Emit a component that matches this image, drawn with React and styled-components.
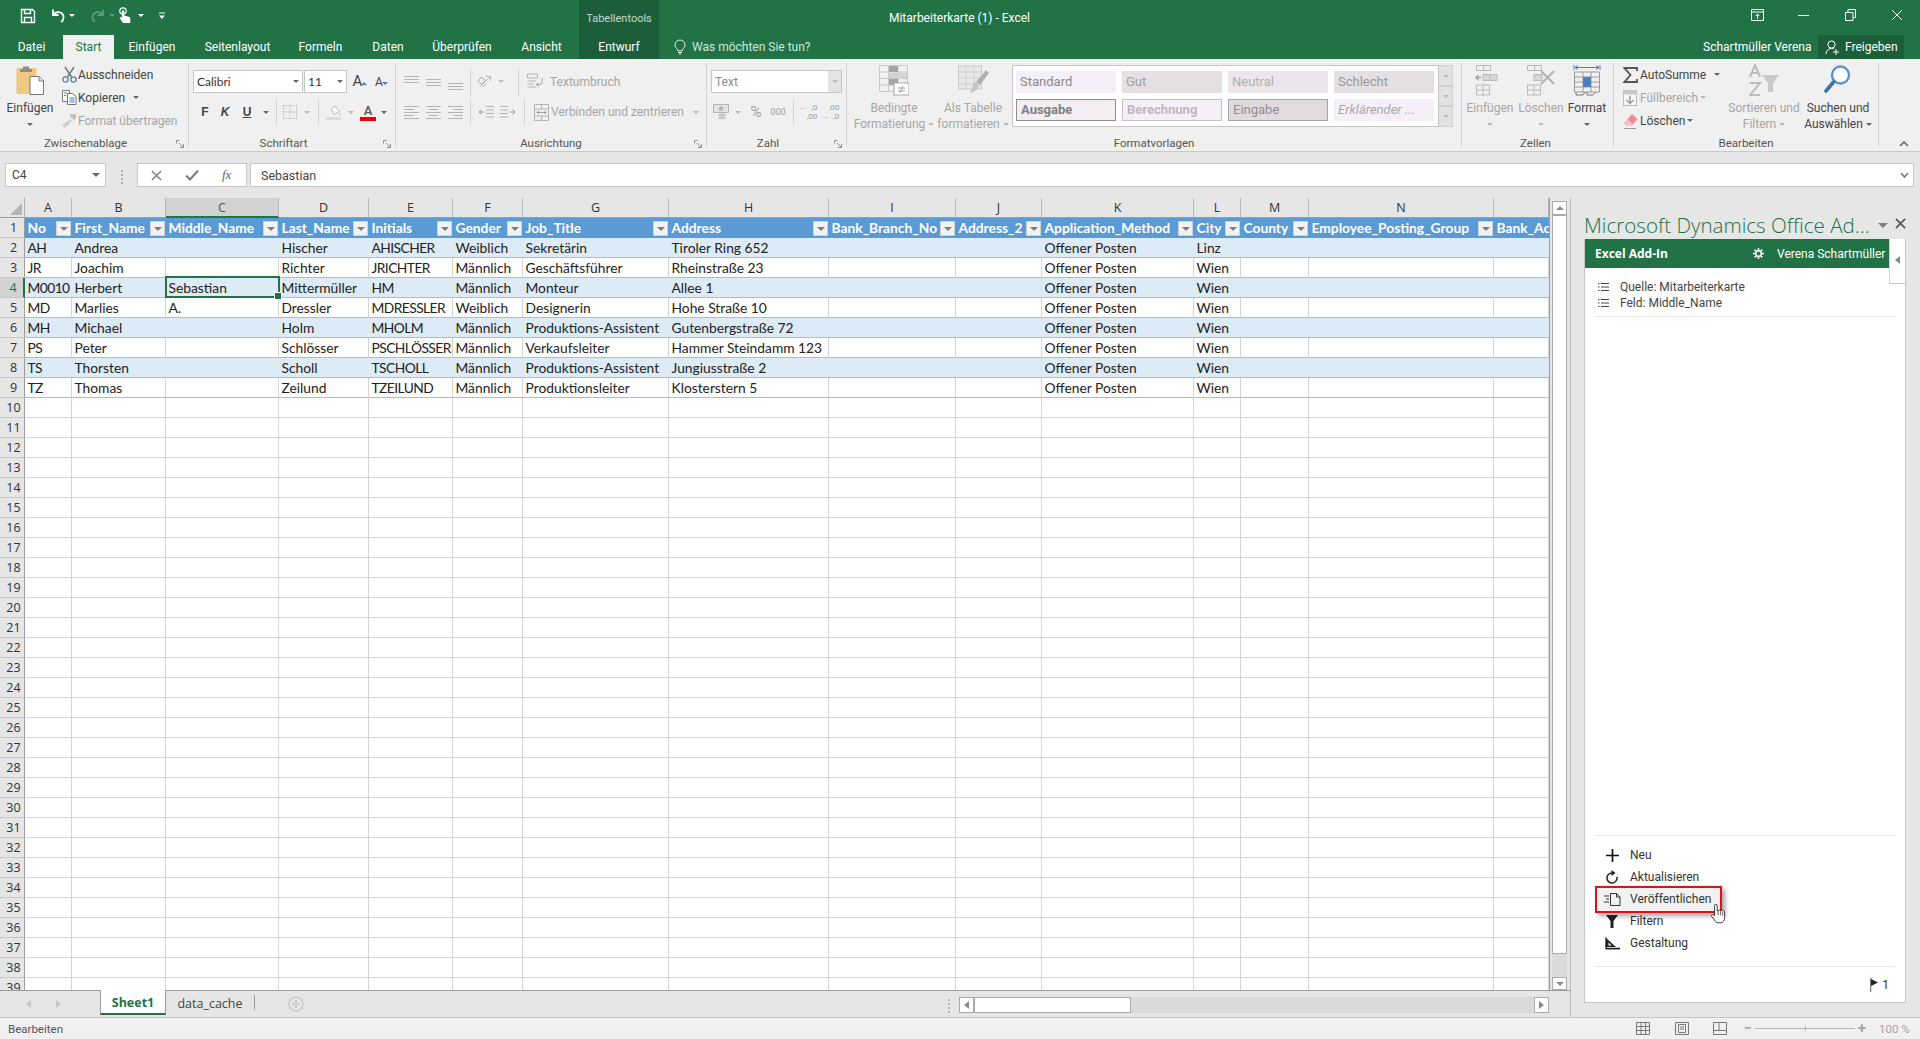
import React from 'react';
import styled, { createGlobalStyle } from 'styled-components';

const GREEN = '#217346';
const DARK = '#1c5e3a';
const OFF = '#a6a6a6';
const UI = '"Roboto", "Open Sans", sans-serif';
const CELL = '"Lato", "Liberation Sans", sans-serif';

const Global = createGlobalStyle`
    html, body { margin: 0; padding: 0; background: #e6e6e6; }
    * { box-sizing: border-box; }
    svg { display: block; }
`;

const Page = styled.div`
    width: 1920px;
    height: 1039px;
    overflow: hidden;
    display: flex;
    flex-direction: column;
    background: #e6e6e6;
    font-family: ${UI};
    font-size: 12px;
    color: #444;
`;

/* ---------- title bar and tabs ---------- */

const Head = styled.div`
    flex: none;
    background: ${GREEN};
    color: #fff;
`;

const TitleRow = styled.div`
    height: 35px;
    display: flex;
`;

const Qat = styled.div`
    width: 579px;
    height: 31px;
    padding-left: 18px;
    display: flex;
    align-items: center;
`;

const ContextLabel = styled.div`
    width: 80px;
    background: ${DARK};
    color: #c5d8cc;
    font-size: 11px;
    text-align: center;
    padding-top: 12px;
`;

const DocTitle = styled.div`
    width: 601px;
    text-align: center;
    padding-top: 11px;
    font-size: 12px;
`;

const WinButtons = styled.div`
    flex: 1;
    display: flex;
    justify-content: flex-end;
    padding-top: 9px;
`;

const WinButton = styled.div`
    width: 46.5px;
    height: 16px;
    display: flex;
    justify-content: center;
`;

const TabRow = styled.div`
    height: 24px;
    display: flex;
    align-items: stretch;
`;

const Tab = styled.div`
    width: ${p => p.$w}px;
    flex: none;
    text-align: center;
    line-height: 24px;
    font-size: 12px;
    background: ${p => (p.$on ? '#f0f0f0' : p.$ctx ? DARK : 'transparent')};
    color: ${p => (p.$on ? GREEN : '#fff')};
`;

const Tell = styled.div`
    width: 1044px;
    display: flex;
    align-items: center;
    padding-left: 15px;
    gap: 6px;
    color: #d3e3d9;
    font-size: 12px;
`;

const UserName = styled.div`
    width: 115px;
    line-height: 24px;
    font-size: 12px;
`;

const Share = styled.div`
    width: 86px;
    display: flex;
    align-items: center;
    gap: 5px;
    padding-left: 7px;
    background: ${DARK};
    font-size: 12px;
`;

/* ---------- ribbon ---------- */

const Ribbon = styled.div`
    height: 93px;
    flex: none;
    background: #f0f0f0;
    border-bottom: 1px solid #c8c8c8;
    padding-top: 4px;
    display: flex;
    align-items: flex-start;
`;

const Group = styled.div`
    position: relative;
    width: ${p => p.$w}px;
    height: 84px;
    flex: none;
    border-right: 1px solid #d2d2d2;
`;

const GroupBody = styled.div`
    height: 72px;
    display: flex;
    padding-left: ${p => p.$pl || 0}px;
    padding-top: ${p => p.$pt || 0}px;
`;

const GroupLabel = styled.div`
    height: 16px;
    line-height: 16px;
    text-align: center;
    padding-right: ${p => p.$pr || 0}px;
    color: #555;
    font-size: 11.5px;
`;

const Launcher = styled.div`
    position: absolute;
    right: 4px;
    bottom: -1px;
`;

const BigButton = styled.div`
    width: ${p => p.$w}px;
    flex: none;
    display: flex;
    flex-direction: column;
    align-items: center;
    color: ${p => (p.$off ? OFF : '#444')};
`;

const BigIcon = styled.div`
    height: 34px;
    display: flex;
    align-items: center;
    justify-content: center;
`;

const BigText = styled.div`
    padding-top: 3px;
    line-height: 16px;
    text-align: center;
    white-space: nowrap;
    display: flex;
    flex-direction: column;
    align-items: center;
`;

const TextLine = styled.div`
    height: 16px;
    display: flex;
    align-items: center;
    gap: 3px;
`;

const Stack = styled.div`
    width: ${p => p.$w}px;
    flex: none;
`;

const StackRow = styled.div`
    height: 23px;
    display: flex;
    align-items: center;
    white-space: nowrap;
    color: ${p => (p.$off ? OFF : '#444')};
`;

const Slot = styled.div`
    width: ${p => p.$w}px;
    flex: none;
    display: flex;
    justify-content: center;
    align-items: center;
    color: ${p => (p.$off ? OFF : '#444')};
`;

const OffText = styled.span`
    color: ${OFF};
`;

const Arrow = styled.span`
    display: inline-block;
    flex: none;
    width: 0;
    height: 0;
    border-left: ${p => p.$s || 3}px solid transparent;
    border-right: ${p => p.$s || 3}px solid transparent;
    border-top: ${p => p.$s || 3}px solid ${p => p.$c || '#666'};
`;

const ArrowUp = styled(Arrow)`
    border-top: 0;
    border-bottom: ${p => p.$s || 3}px solid ${p => p.$c || '#666'};
`;

const Sep = styled.div`
    width: ${p => p.$w}px;
    height: 26px;
    flex: none;
    position: relative;
    &::after {
        content: '';
        display: block;
        width: 1px;
        height: 100%;
        margin: 0 auto;
        background: #d2d2d2;
    }
`;

const Rows = styled.div`
    display: flex;
    flex-direction: column;
    gap: 8px;
`;

const ToolRow = styled.div`
    height: ${p => p.$h || 23}px;
    display: flex;
    align-items: center;
    white-space: nowrap;
`;

const Select = styled.div`
    width: ${p => p.$w}px;
    height: 23px;
    flex: none;
    margin-right: ${p => p.$mr || 0}px;
    background: #fff;
    border: 1px solid #c6c6c6;
    display: flex;
    align-items: center;
    justify-content: space-between;
    padding-left: 3px;
    color: ${p => p.$c || '#333'};
    font-family: ${p => p.$calibri ? CELL : UI};
`;

const SelectDrop = styled.div`
    width: 13px;
    height: 100%;
    display: flex;
    align-items: center;
    justify-content: center;
    background: ${p => (p.$off ? '#e3e3e3' : 'transparent')};
`;

const BoldGlyph = styled.span`
    font-family: "Liberation Sans", sans-serif;
    font-weight: 700;
    font-style: ${p => (p.$i ? 'italic' : 'normal')};
    text-decoration: ${p => (p.$u ? 'underline' : 'none')};
    font-size: 12px;
    color: #444;
`;

const FontA = styled.span`
    position: relative;
    font-family: ${UI};
    font-size: ${p => p.$s}px;
    line-height: 1;
    color: #444;
`;

const ColorA = styled.span`
    display: flex;
    flex-direction: column;
    align-items: center;
    font-size: 13px;
    line-height: 13px;
    font-weight: 500;
    color: #555;
    &::after {
        content: '';
        width: 16px;
        height: 4px;
        background: #f00000;
    }
`;

const SizeMark = styled.span`
    position: absolute;
    top: -1px;
    right: -5px;
`;

const Percent = styled.span`
    font-size: 15px;
    color: #a0a0a0;
`;

const Thousands = styled.span`
    font-size: 9px;
    color: #a0a0a0;
`;

const DecMark = styled.span`
    display: grid;
    grid-template-columns: auto auto;
    font-size: 8px;
    line-height: 9px;
    color: #a0a0a0;
    text-align: right;
`;

const Gallery = styled.div`
    display: flex;
    margin: 2px 0 0 7px;
    height: 62px;
`;

const GalleryGrid = styled.div`
    width: 427px;
    background: #fff;
    border: 1px solid #c6c6c6;
    padding: 5px 3px;
    display: grid;
    grid-template-columns: repeat(4, 100px);
    grid-template-rows: 22px 22px;
    gap: 6px;
`;

const Style = styled.div`
    background: ${p => p.$bg};
    border: ${p => (p.$line ? `1px solid ${p.$line}` : '0')};
    color: ${p => p.$c};
    font-weight: ${p => (p.$b ? 700 : 400)};
    font-style: ${p => (p.$i ? 'italic' : 'normal')};
    padding-left: 4px;
    line-height: ${p => (p.$line ? 20 : 22)}px;
    font-size: 13px;
    white-space: nowrap;
`;

const GalleryScroll = styled.div`
    width: 14px;
    display: grid;
    grid-template-rows: 21px 20px 21px;
`;

const ScrollPart = styled.div`
    background: #e2e2e2;
    border: 1px solid #d0d0d0;
    border-left: 0;
    display: flex;
    align-items: center;
    justify-content: center;
`;

const Collapse = styled.div`
    flex: 1;
    height: 84px;
    display: flex;
    justify-content: flex-end;
    align-items: flex-end;
    padding: 0 11px 0 0;
`;

/* ---------- formula bar ---------- */

const FormulaBar = styled.div`
    height: 46px;
    flex: none;
    padding: 11px 6px 0 5px;
    display: flex;
    align-items: flex-start;
`;

const NameBox = styled.div`
    width: 101px;
    height: 24px;
    background: #fff;
    border: 1px solid #c6c6c6;
    display: flex;
    align-items: center;
    justify-content: space-between;
    padding: 0 5px 0 6px;
    font-size: 12px;
`;

const Dots = styled.div`
    width: 31px;
    height: 24px;
    display: flex;
    flex-direction: column;
    align-items: center;
    justify-content: center;
    gap: 2px;
    &::before, &::after {
        content: '';
        width: 2px;
        height: 2px;
        background: #b5b5b5;
        box-shadow: 0 4px 0 #b5b5b5;
    }
    &::after { margin-top: 4px; }
`;

const FxBox = styled.div`
    width: 110px;
    height: 24px;
    background: #fff;
    border: 1px solid #c6c6c6;
    display: flex;
    align-items: center;
    padding-left: 13px;
    gap: 23px;
`;

const FxText = styled.span`
    font-family: "Liberation Serif", serif;
    font-style: italic;
    color: #666;
    font-size: 13px;
`;

const FormulaInput = styled.div`
    flex: 1;
    height: 24px;
    margin-left: 3px;
    background: #fff;
    border: 1px solid #c6c6c6;
    display: flex;
    align-items: center;
    justify-content: space-between;
    padding: 0 4px 0 10px;
    font-family: ${UI};
    font-size: 12.5px;
`;

/* ---------- grid ---------- */

const Main = styled.div`
    height: 820px;
    flex: none;
    display: flex;
    border-bottom: 1px solid #c6c6c6;
`;

const SheetArea = styled.div`
    width: 1571px;
    flex: none;
    border-right: 1px solid #b8b8b8;
    display: flex;
    flex-direction: column;
`;

const GridWrap = styled.div`
    height: 792px;
    flex: none;
    display: flex;
`;

const Grid = styled.div`
    width: 1550px;
    height: 792px;
    overflow: hidden;
    background: #fff;
    border-right: 1px solid #9c9c9c;
`;

const COLS = [47, 94, 113, 90, 84, 70, 146, 160, 127, 86, 152, 47, 68, 185, 55];
const COL_TRACK = COLS.map(c => c + 'px').join(' ');

const RowLine = styled.div`
    height: 20px;
    display: grid;
    grid-template-columns: 25px ${COL_TRACK};
    grid-template-rows: 20px;
`;

const Corner = styled.div`
    background: #e6e6e6;
    border-right: 1px solid #b0b0b0;
    border-bottom: 1px solid #9c9c9c;
    position: relative;
    overflow: hidden;
    &::after {
        content: '';
        position: absolute;
        right: 2px;
        bottom: 2px;
        border-left: 12px solid transparent;
        border-bottom: 12px solid #b5b5b5;
    }
`;

const ColHead = styled.div`
    background: ${p => (p.$on ? '#d2d2d2' : '#e6e6e6')};
    color: ${p => (p.$on ? GREEN : '#333')};
    border-right: 1px solid #b8b8b8;
    border-bottom: ${p => (p.$on ? `2px solid ${GREEN}` : '1px solid #9c9c9c')};
    text-align: center;
    font-size: 12.5px;
    line-height: 19px;
    font-family: "Open Sans", sans-serif;
`;

const RowHead = styled.div`
    background: ${p => (p.$on ? '#d2d2d2' : '#e6e6e6')};
    color: ${p => (p.$on ? GREEN : '#333')};
    border-right: ${p => (p.$on ? `2px solid ${GREEN}` : '1px solid #9c9c9c')};
    border-bottom: 1px solid #c8c8c8;
    text-align: center;
    font-size: 12.5px;
    line-height: 19px;
    padding-left: 3px;
    font-family: "Open Sans", sans-serif;
`;

const Cell = styled.div`
    position: relative;
    font-family: ${CELL};
    font-size: 13.8px;
    letter-spacing: ${p => (p.$tight ? '-0.55px' : '0')};
    line-height: 19px;
    padding-left: 2.5px;
    color: #222;
    white-space: nowrap;
    overflow: ${p => (p.$sel ? 'visible' : 'hidden')};
    background: ${p => (p.$band ? '#ddebf7' : '#fff')};
    border-bottom: 1px solid ${p => (p.$table ? '#9bc2e6' : '#d4d4d4')};
    border-right: ${p => (p.$band ? '0' : '1px solid #d4d4d4')};
`;

const HeadCell = styled.div`
    position: relative;
    font-family: ${CELL};
    font-size: 13.8px;
    font-weight: 700;
    line-height: 19px;
    padding-left: 2.5px;
    color: #fff;
    background: #5b9bd5;
    white-space: nowrap;
    overflow: hidden;
`;

const FilterButton = styled.div`
    position: absolute;
    right: 1px;
    top: 3px;
    width: 15px;
    height: 15px;
    background: #f2f2f2;
    border: 1px solid #d0d0d0;
    display: flex;
    align-items: center;
    justify-content: center;
`;

const Selection = styled.div`
    position: absolute;
    inset: -2px -1px -1px -1px;
    border: 2px solid ${GREEN};
    z-index: 2;
    &::after {
        content: '';
        position: absolute;
        right: -4px;
        bottom: -4px;
        width: 6px;
        height: 6px;
        background: ${GREEN};
        border: 1px solid #fff;
    }
`;

const VScroll = styled.div`
    width: 15px;
    height: 792px;
    margin-left: 2px;
    padding-top: 3px;
    display: flex;
    flex-direction: column;
`;

const ScrollButton = styled.div`
    width: 15px;
    height: ${p => p.$h || 14}px;
    flex: none;
    background: #fff;
    border: 1px solid #ababab;
    display: flex;
    align-items: center;
    justify-content: center;
`;

const ScrollTrack = styled.div`
    flex: 1;
    background: #dadada;
`;

/* ---------- sheet tabs ---------- */

const TabBar = styled.div`
    height: 27px;
    flex: none;
    display: flex;
    border-top: 1px solid #9c9c9c;
`;

const TabNav = styled.div`
    width: 100px;
    flex: none;
    display: flex;
    align-items: center;
    padding-left: 26px;
    gap: 25px;
    height: 26px;
`;

const SheetTab = styled.div`
    width: ${p => p.$w}px;
    flex: none;
    height: ${p => (p.$on ? 25 : 26)}px;
    margin-top: ${p => (p.$on ? -1 : 0)}px;
    background: ${p => (p.$on ? '#fff' : 'transparent')};
    border-left: ${p => (p.$on ? '1px solid #9c9c9c' : 0)};
    border-right: ${p => (p.$on ? '1px solid #9c9c9c' : 0)};
    border-bottom: ${p => (p.$on ? `2px solid ${GREEN}` : 0)};
    color: ${p => (p.$on ? GREEN : '#444')};
    font-weight: ${p => (p.$on ? 700 : 400)};
    font-family: "Open Sans", sans-serif;
    font-size: 12.5px;
    line-height: 25px;
    text-align: center;
`;

const TabDivider = styled.div`
    width: 1px;
    height: 15px;
    margin-top: 4px;
    background: #9c9c9c;
`;

const AddSheet = styled.div`
    width: 16px;
    height: 16px;
    margin: 5px 0 0 33px;
`;

const HDots = styled(Dots)`
    width: 20px;
    height: 26px;
    margin-left: 635px;
    margin-right: 0;
`;

const HScroll = styled.div`
    width: 590px;
    height: 16px;
    margin-top: 6px;
    display: flex;
    flex: none;
    background: #dadada;
`;

const HButton = styled.div`
    width: ${p => p.$w}px;
    flex: none;
    background: #fff;
    border: 1px solid #ababab;
    display: flex;
    align-items: center;
    justify-content: center;
`;

const HSpace = styled.div`
    flex: 1;
`;

const TriLeft = styled.span`
    width: 0;
    height: 0;
    border-top: 4px solid transparent;
    border-bottom: 4px solid transparent;
    border-right: 5px solid ${p => p.$c || '#8a8a8a'};
`;

const TriRight = styled.span`
    width: 0;
    height: 0;
    border-top: 4px solid transparent;
    border-bottom: 4px solid transparent;
    border-left: 5px solid ${p => p.$c || '#8a8a8a'};
`;

/* ---------- task pane ---------- */

const Pane = styled.div`
    flex: 1;
    padding: 13px 14px 14px 13px;
    display: flex;
    flex-direction: column;
    min-width: 0;
`;

const PaneTitleRow = styled.div`
    height: 28px;
    flex: none;
    display: flex;
    align-items: center;
`;

const PaneTitle = styled.div`
    flex: 1;
    color: ${GREEN};
    font-family: "Open Sans", sans-serif;
    font-weight: 300;
    font-size: 20.6px;
    white-space: nowrap;
`;

const PaneClose = styled.div`
    margin: -4px 0 0 7px;
`;

const PaneBox = styled.div`
    flex: 1;
    min-height: 0;
    display: flex;
    flex-direction: column;
    background: #fff;
    border: 1px solid #c6c6c6;
    position: relative;
`;

const PaneHead = styled.div`
    height: 29px;
    width: 304px;
    flex: none;
    background: ${GREEN};
    color: #fff;
    display: flex;
    align-items: center;
    padding-left: 10px;
    margin-top: -1px;
`;

const PaneBrand = styled.div`
    width: 158px;
    font-weight: 700;
    font-family: "Open Sans", sans-serif;
    font-size: 12px;
`;

const PaneUser = styled.div`
    margin-left: 13px;
    font-size: 12px;
    white-space: nowrap;
`;

const PaneToggle = styled.div`
    position: absolute;
    top: -1px;
    right: 0;
    width: 16px;
    height: 45px;
    background: #fff;
    border-left: 1px solid #d4d4d4;
    border-bottom: 1px solid #c6c6c6;
    display: flex;
    align-items: center;
    justify-content: center;
    padding-bottom: 3px;
`;

const Meta = styled.div`
    margin: 11px 10px 0;
    padding-bottom: 5px;
    border-bottom: 1px solid #e6e6e6;
`;

const MetaRow = styled.div`
    height: 16px;
    display: flex;
    align-items: center;
    gap: 11px;
    padding-left: 3px;
    color: #444;
    font-size: 12px;
`;

const Fill = styled.div`
    flex: 1;
`;

const Actions = styled.div`
    margin: 0 10px;
    padding: 8px 0 12px;
    border-top: 1px solid #e6e6e6;
    border-bottom: 1px solid #e6e6e6;
    display: flex;
    flex-direction: column;
`;

const Action = styled.div`
    position: relative;
    display: flex;
    align-items: center;
    align-self: flex-start;
    width: ${p => (p.$on ? 127 : 200)}px;
    height: ${p => (p.$on ? 27 : 22)}px;
    margin: ${p => (p.$on ? '-2.5px 0' : 0)};
    padding-left: ${p => (p.$on ? 3 : 5)}px;
    color: #333;
    font-size: 12px;
    background: ${p => (p.$on ? '#f2f2f2' : 'transparent')};
    border: ${p => (p.$on ? '2px solid #e2101a' : 0)};
    box-shadow: ${p => (p.$on ? '3px 3px 5px rgba(0,0,0,.35)' : 'none')};
    z-index: ${p => (p.$on ? 1 : 0)};
`;

const ActionIcon = styled.div`
    width: 24px;
    margin-right: 6px;
    display: flex;
    justify-content: center;
`;

const Cursor = styled.div`
    position: absolute;
    right: -7px;
    top: 15px;
    z-index: 3;
`;

const PaneFoot = styled.div`
    height: 35px;
    flex: none;
    display: flex;
    align-items: center;
    justify-content: flex-end;
    gap: 3px;
    padding-right: 16px;
    font-size: 12px;
    color: #333;
`;

/* ---------- status bar ---------- */

const StatusBar = styled.div`
    height: 21px;
    flex: none;
    display: flex;
    align-items: center;
    background: #f0f0f0;
    padding-left: 8px;
    font-size: 11.5px;
    color: #555;
    white-space: nowrap;
`;

const StatusLeft = styled.div`
    width: 1616px;
    flex: none;
`;

const ViewIcon = styled.div`
    width: 38.5px;
    flex: none;
    display: flex;
    justify-content: center;
`;

const Zoom = styled.div`
    display: flex;
    align-items: center;
    margin-left: 4px;
    gap: 3px;
`;

const ZoomMark = styled.div`
    color: #a6a6a6;
    font-size: 15px;
    font-weight: 700;
    line-height: 1;
`;

const ZoomTrack = styled.div`
    position: relative;
    width: 100px;
    height: 1px;
    background: #b5b5b5;
    &::after {
        content: '';
        position: absolute;
        left: 50%;
        top: -2px;
        width: 1px;
        height: 5px;
        background: #b5b5b5;
    }
`;

const ZoomValue = styled.div`
    margin-left: 10px;
    color: #a6a6a6;
`;

/* ---------- icons ---------- */

const Svg = ({ w = 16, h = 16, vb, children, ...rest }) => (
    <svg width={w} height={h} viewBox={vb || `0 0 ${w} ${h}`} fill="none" {...rest}>{children}</svg>
);

const SaveIcon = () => (
    <Svg w={16} h={16}>
        <path d="M1.5 1.5h11l2 2v11h-13z" stroke="#fff" strokeWidth="1.4" />
        <path d="M4.5 1.5v4h6v-4M4.5 14.5v-5h7v5" stroke="#fff" strokeWidth="1.4" />
    </Svg>
);

const UndoIcon = ({ c = '#fff', flip }) => (
    <Svg w={16} h={16} style={flip ? { transform: 'scaleX(-1)' } : null}>
        <path d="M3 1.5v5.5h5.5" stroke={c} strokeWidth="1.8" />
        <path d="M3.5 6.5C5.5 3.8 9.5 3.2 12 5.5s1.8 6.3-.8 8.5" stroke={c} strokeWidth="1.8" />
    </Svg>
);

const TouchIcon = () => (
    <Svg w={14} h={18}>
        <circle cx="5" cy="4" r="3.2" stroke="#fff" strokeWidth="1.2" />
        <path d="M3.8 4.5a1.2 1.2 0 0 1 2.4 0v4l4.5 1.2c1.2.3 1.6 1 1.6 2.2V16H5L1.5 11l1-1 1.3 1z" fill="#fff" />
    </Svg>
);

const CustomizeIcon = () => (
    <Svg w={8} h={8}>
        <path d="M1 1h6" stroke="#fff" />
        <path d="M1 3.5h6L4 7z" fill="#fff" />
    </Svg>
);

const BulbIcon = () => (
    <Svg w={12} h={16}>
        <path d="M3.5 10.5C2 9 1 7.8 1 6a5 5 0 0 1 10 0c0 1.8-1 3-2.5 4.5v1.2h-5z" stroke="#e4eee8" />
        <path d="M4 13.5h4M4.8 15h2.4" stroke="#e4eee8" />
    </Svg>
);

const BoxArrowIcon = () => (
    <Svg w={13} h={12}>
        <path d="M.5.5h12v11H.5zM.5 3h12" stroke="#fff" />
        <path d="M6.5 10V5M4.5 7l2-2 2 2" stroke="#fff" />
    </Svg>
);

const MinIcon = () => <Svg w={11} h={12}><path d="M0 6.5h11" stroke="#fff" /></Svg>;

const RestoreIcon = () => (
    <Svg w={11} h={12}>
        <path d="M.5 3.5h7.5v8H.5zM3 3.5v-3h7.5v8H8" stroke="#fff" />
    </Svg>
);

const CloseIcon = ({ c = '#fff', s = 12, sw = 1 }) => (
    <Svg w={s} h={s} vb="0 0 12 12">
        <path d="M1 1l10 10M11 1L1 11" stroke={c} strokeWidth={sw} />
    </Svg>
);

const ShareIcon = () => (
    <Svg w={15} h={15}>
        <circle cx="6.5" cy="4.5" r="3.6" stroke="#fff" />
        <path d="M1 14c.3-3.4 2.4-5.6 5.5-5.6 1 0 1.8.2 2.5.6" stroke="#fff" />
        <path d="M11 9v6M8 12h6" stroke="#fff" />
    </Svg>
);

const PasteIcon = () => (
    <Svg w={29} h={30}>
        <rect x="0.5" y="3" width="20" height="26" rx="1.5" fill="#efc982" />
        <path d="M7 1.5h6V4h3v3H4V4h3z" fill="#8d8d8d" />
        <path d="M14 11.5h9l4.5 4.5v13.5H14z" fill="#fff" stroke="#777" />
        <path d="M23 11.5V16h4.5" stroke="#777" />
    </Svg>
);

const ScissorsIcon = () => (
    <Svg w={15} h={17}>
        <path d="M3 1l6.5 10M12 1L5.5 11" stroke="#777" strokeWidth="1.5" />
        <circle cx="3.5" cy="13.5" r="2.6" stroke="#4a82bb" strokeWidth="1.3" />
        <circle cx="11.5" cy="13.5" r="2.6" stroke="#4a82bb" strokeWidth="1.3" />
    </Svg>
);

const CopyIcon = () => (
    <Svg w={15} h={15}>
        <path d="M.5.5h7v11h-7z" stroke="#777" fill="#fff" />
        <path d="M5.5 3.5h5l3.5 3v8h-8.5z" stroke="#777" fill="#fff" />
        <path d="M2 3h3M2 5.5h2M7.5 8h5M7.5 10h5M7.5 12h5" stroke="#4a82bb" />
    </Svg>
);

const PainterIcon = () => (
    <Svg w={16} h={16}>
        <path d="M9 1h6v4l-2 2-4-4z" fill="#c0c0c0" />
        <path d="M10 6L1 12l3 3 7-7z" fill="#cfcfcf" />
    </Svg>
);

const BorderIcon = () => (
    <Svg w={14} h={14}>
        <path d="M.5.5h13v13H.5zM7 .5v13M.5 7h13" stroke="#bcbcbc" strokeDasharray="1.5 1" />
    </Svg>
);

const FillIcon = () => (
    <Svg w={16} h={16}>
        <path d="M5 5l4-3 4.5 5-5 4z" stroke="#bdbdbd" fill="#f7f7f7" />
        <path d="M13 9c1 1.5 1.5 2 1.2 3" stroke="#bdbdbd" />
        <rect x="0" y="13" width="15" height="3" fill="#dcdcdc" />
    </Svg>
);

const LinesIcon = ({ rows, c = '#b5b5b5' }) => (
    <Svg w={15} h={16}>
        {rows.map(([y, x0, x1], i) => <path key={i} d={`M${x0} ${y}.5H${x1}`} stroke={c} />)}
    </Svg>
);

const OrientIcon = () => (
    <Svg w={18} h={16}>
        <path d="M3 13L13 3M9 2.5h4.5V7" stroke="#b5b5b5" />
        <path d="M1 7l3.5-4L8 6.5 4.5 10.5zM6 13l3.5-3.5" stroke="#a8a8a8" />
    </Svg>
);

const IndentIcon = ({ flip }) => (
    <Svg w={16} h={14} style={flip ? { transform: 'scaleX(-1)' } : null}>
        <path d="M8 1.5h8M8 5h8M8 8.5h8M8 12h8" stroke="#b5b5b5" />
        <path d="M6 7H1M3.5 4.5L1 7l2.5 2.5" stroke="#9a9a9a" />
    </Svg>
);

const WrapIcon = () => (
    <Svg w={16} h={17}>
        <path d="M.5 1h10v4H.5zM.5 8h8M.5 11h6M.5 14h9" stroke="#b5b5b5" />
        <path d="M15 5v4.5a2 2 0 0 1-2 2H9.5M11.5 9.5l-2 2 2 2" stroke="#a5a5a5" />
    </Svg>
);

const MergeIcon = () => (
    <Svg w={15} h={17}>
        <path d="M.5.5h14v16H.5zM.5 5h14M.5 12h14M7.5.5V5M7.5 12v4.5" stroke="#b5b5b5" />
        <path d="M3 8.5h9M4.5 7l-1.5 1.5L4.5 10M10.5 7l1.5 1.5L10.5 10" stroke="#a0a0a0" />
    </Svg>
);

const CashIcon = () => (
    <Svg w={17} h={17}>
        <rect x="0.5" y="0.5" width="15" height="8" fill="#e3e3e3" stroke="#b5b5b5" />
        <circle cx="8" cy="4.5" r="2.3" fill="#b5b5b5" />
        <ellipse cx="9" cy="11" rx="4" ry="1.4" fill="#c8c8c8" />
        <ellipse cx="9" cy="14" rx="4" ry="1.4" fill="#c8c8c8" />
    </Svg>
);

const CondIcon = () => (
    <Svg w={30} h={31}>
        <path d="M.5.5h28v26H.5zM.5 7h28M.5 13.5h28M.5 20h28M9.5.5v26M19 .5v26" stroke="#c9c9c9" />
        <rect x="10" y="1" width="9" height="6" fill="#a5a5a5" />
        <rect x="10" y="8" width="18" height="5" fill="#d4d4d4" />
        <rect x="10" y="14" width="9" height="6" fill="#a5a5a5" />
        <rect x="15" y="18" width="15" height="12" fill="#fff" stroke="#aaa" />
        <path d="M19 23h7M19 26h7M24 21l-3 7" stroke="#a0a0a0" />
    </Svg>
);

const TableIcon = () => (
    <Svg w={31} h={30}>
        <rect x="0.5" y="1" width="23" height="23" fill="#e8e8e8" stroke="#c9c9c9" />
        <path d="M.5 7h23M.5 13h23M.5 19h23M8 1v23M16 1v23" stroke="#cfcfcf" />
        <path d="M28 5l3 3-9 12-4-3z" fill="#b0b0b0" />
        <path d="M17 17l4 4c-2 4-5 6-9 7 2-3 2-8 5-11z" fill="#c5c5c5" />
    </Svg>
);

const CellsIcon = ({ kind }) => (
    <Svg w={kind === 'format' ? 28 : 30} h={32}>
        {kind !== 'format' && <>
            <path d="M1.5 1.5h7v5h-7zM8.5 1.5h7v5h-7z" stroke="#b9b9b9" />
            <path d="M1.5 21h13v10h-13zM8 21v10M1.5 26h13" stroke="#b9b9b9" />
        </>}
        {kind === 'insert' && <>
            <path d="M6 13.5H1M3.5 11L1 13.5 3.5 16" stroke="#a5a5a5" strokeWidth="1.5" />
            <rect x="8" y="10.5" width="7" height="6" fill="#d8d8d8" stroke="#b9b9b9" />
            <rect x="15" y="10.5" width="7" height="6" fill="#d8d8d8" stroke="#b9b9b9" />
        </>}
        {kind === 'delete' && <>
            <rect x="8" y="10.5" width="8" height="6" fill="#d8d8d8" stroke="#b9b9b9" />
            <path d="M15 7l13 13M28 7L15 20" stroke="#b3b3b3" strokeWidth="2" />
        </>}
        {kind === 'format' && <>
            <path d="M1 1v5M27 1v5M2 3.5h24M5 1.5L2 3.5l3 2M23 1.5l3 2-3 2" stroke="#4a82bb" />
            <path d="M1.5 8h25v20h-25zM1.5 13h25M1.5 18h25M1.5 23h25M10 8v20M18 8v20" stroke="#9a9a9a" />
            <rect x="10" y="13" width="8" height="10" fill="#4a82bb" />
            <path d="M3 28v3h7l2-3M14 28v3h6l3-3" stroke="#777" />
        </>}
    </Svg>
);

const SigmaIcon = () => (
    <Svg w={15} h={16}>
        <path d="M14 4V1H1.5l6 7-6 7H14v-3" stroke="#555" strokeWidth="1.8" />
    </Svg>
);

const FillDownIcon = () => (
    <Svg w={14} h={16}>
        <rect x="0.5" y="0.5" width="13" height="15" fill="#f7f7f7" stroke="#bcbcbc" />
        <rect x="0.5" y="0.5" width="13" height="4" fill="#c9c9c9" />
        <path d="M7 5.5v8M3.5 10L7 13.5 10.5 10" stroke="#9f9f9f" strokeWidth="1.5" />
    </Svg>
);

const EraserIcon = () => (
    <Svg w={15} h={16}>
        <path d="M9 1l5.5 5-6 7H4L1 10z" fill="#ee8b9b" />
        <path d="M1 10l3 3h4.5l1-1.2L4.5 6z" fill="#f4c2cb" />
        <path d="M1 15.5h12" stroke="#999" />
    </Svg>
);

const SortIcon = () => (
    <Svg w={31} h={33} vb="0 0 31 33">
        <path d="M1 13L6 1l5 12M3 9h6" stroke="#bcbcbc" strokeWidth="2" />
        <path d="M1 19h10L1 31h10" stroke="#bcbcbc" strokeWidth="2" />
        <path d="M13 11h17l-6 8v9h-5v-9z" fill="#c9c9c9" />
    </Svg>
);

const FindIcon = () => (
    <Svg w={28} h={32}>
        <circle cx="16.5" cy="11" r="8.5" stroke="#5d94c8" strokeWidth="2.4" fill="#fff" />
        <path d="M9.5 18L2 27" stroke="#3a75ae" strokeWidth="3.6" strokeLinecap="round" />
    </Svg>
);

const Launch = () => (
    <Svg w={8} h={8}>
        <path d="M.5 .5h3M.5.5v3M7.5 4v3.5H4M3 3l4 4" stroke="#8e8e8e" />
    </Svg>
);

const CheckIcon = () => (
    <Svg w={14} h={12}>
        <path d="M1 6.5l4 4 8-9" stroke="#7d7d7d" strokeWidth="2" />
    </Svg>
);

const ChevronDown = () => (
    <Svg w={9} h={7}>
        <path d="M1 1l3.5 4L8 1" stroke="#777" strokeWidth="1.5" />
    </Svg>
);

const GearIcon = () => (
    <Svg w={11} h={11}>
        <circle cx="5.5" cy="5.5" r="2.8" stroke="#fff" strokeWidth="1.6" />
        <path d="M5.5 0v2M5.5 9v2M0 5.5h2M9 5.5h2M1.6 1.6L3 3M8 8l1.4 1.4M1.6 9.4L3 8M8 3l1.4-1.4" stroke="#fff" strokeWidth="1.6" />
    </Svg>
);

const ListIcon = () => (
    <Svg w={11} h={10}>
        <path d="M0 1.5h1.5M3 1.5h8M0 5h1.5M3 5h8M0 8.5h1.5M3 8.5h8" stroke="#444" />
    </Svg>
);

const PlusIcon = () => (
    <Svg w={13} h={13}>
        <path d="M6.5 0v13M0 6.5h13" stroke="#111" strokeWidth="1.7" />
    </Svg>
);

const RefreshIcon = () => (
    <Svg w={12} h={14}>
        <path d="M10.9 7A5 5 0 1 1 6 3" stroke="#222" strokeWidth="1.5" />
        <path d="M5.5 0l4 3-4 3z" fill="#222" />
    </Svg>
);

const PublishIcon = () => (
    <Svg w={18} h={13}>
        <path d="M7.5.5h6l3.5 3.5v8.5H7.5zM13.5.5V4H17" stroke="#333" />
        <path d="M1 3h5M3 6h3M1 9h5" stroke="#333" />
    </Svg>
);

const FilterIcon = () => (
    <Svg w={12} h={13}>
        <path d="M0 0h12L7.5 6v7h-3V6z" fill="#222" />
    </Svg>
);

const DesignIcon = () => (
    <Svg w={15} h={13}>
        <path d="M1 .5v11h14" stroke="#222" strokeWidth="1.4" />
        <path d="M1 1l10 9H1z" fill="#222" />
        <path d="M3.5 8.5h3L3.5 5.5z" fill="#fff" />
        <path d="M1 12.5h14" stroke="#999" />
    </Svg>
);

const HandCursor = () => (
    <Svg w={17} h={22} vb="0 0 18 25">
        <path d="M4.5 3a1.5 1.5 0 0 1 3 0v6l1-.3c.3-1 2.2-1 2.6 0 .5-.8 2.2-.7 2.5.3.7-.4 2.4 0 2.4 1.2v6.3c0 3-1.8 6-4.5 6H8.5c-2 0-3-1-4-3L1.2 15c-.7-1.4.9-2.6 2-1.6l1.3 1.3z" fill="#fff" stroke="#222" />
        <path d="M8.5 9v5M11.2 9v5M13.8 10v4.5" stroke="#222" strokeWidth=".8" />
    </Svg>
);

const FlagIcon = () => (
    <Svg w={9} h={14}>
        <path d="M.5 0v14" stroke="#888" strokeWidth="1.6" />
        <path d="M1 1l7 3.5L1 8z" fill="#222" />
    </Svg>
);

const GridView = () => (
    <Svg w={14} h={13}>
        <path d="M.5.5h13v12H.5zM.5 4.5h13M.5 8.5h13M5 .5v12M9.5 .5v12" stroke="#777" />
    </Svg>
);

const PageView = () => (
    <Svg w={14} h={13}>
        <path d="M.5.5h13v12H.5z" stroke="#777" />
        <path d="M3.5 2.5h7v8h-7zM5 5h4M5 7h4" stroke="#777" />
    </Svg>
);

const BreakView = () => (
    <Svg w={14} h={13}>
        <path d="M.5.5h13v12H.5zM.5 8.5h13M6 .5v8" stroke="#777" />
    </Svg>
);

const AddIcon = () => (
    <Svg w={16} h={16}>
        <circle cx="8" cy="8" r="7" stroke="#c8c8c8" strokeWidth="1.4" />
        <path d="M8 4v8M4 8h8" stroke="#c8c8c8" strokeWidth="1.6" />
    </Svg>
);

/* ---------- data ---------- */

const HEADERS = ['No', 'First_Name', 'Middle_Name', 'Last_Name', 'Initials', 'Gender', 'Job_Title', 'Address',
    'Bank_Branch_No', 'Address_2', 'Application_Method', 'City', 'County', 'Employee_Posting_Group', 'Bank_Ac'];

const PEOPLE = [
    ['AH', 'Andrea', '', 'Hischer', 'AHISCHER', 'Weiblich', 'Sekretärin', 'Tiroler Ring 652', 'Linz'],
    ['JR', 'Joachim', '', 'Richter', 'JRICHTER', 'Männlich', 'Geschäftsführer', 'Rheinstraße 23', 'Wien'],
    ['M0010', 'Herbert', 'Sebastian', 'Mittermüller', 'HM', 'Männlich', 'Monteur', 'Allee 1', 'Wien'],
    ['MD', 'Marlies', 'A.', 'Dressler', 'MDRESSLER', 'Weiblich', 'Designerin', 'Hohe Straße 10', 'Wien'],
    ['MH', 'Michael', '', 'Holm', 'MHOLM', 'Männlich', 'Produktions-Assistent', 'Gutenbergstraße 72', 'Wien'],
    ['PS', 'Peter', '', 'Schlösser', 'PSCHLÖSSER', 'Männlich', 'Verkaufsleiter', 'Hammer Steindamm 123', 'Wien'],
    ['TS', 'Thorsten', '', 'Scholl', 'TSCHOLL', 'Männlich', 'Produktions-Assistent', 'Jungiusstraße 2', 'Wien'],
    ['TZ', 'Thomas', '', 'Zeilund', 'TZEILUND', 'Männlich', 'Produktionsleiter', 'Klosterstern 5', 'Wien'],
];

const LETTERS = 'ABCDEFGHIJKLMN'.split('');

const cellsFor = p => [p[0], p[1], p[2], p[3], p[4], p[5], p[6], p[7], '', '', 'Offener Posten', p[8], '', '', ''];

const STYLES = [
    { t: 'Standard', $bg: '#f5f0f7', $c: '#8a8a8a' },
    { t: 'Gut', $bg: '#e5e0e4', $c: '#a0a0a0' },
    { t: 'Neutral', $bg: '#ebe6eb', $c: '#b0b0b0' },
    { t: 'Schlecht', $bg: '#e3dfe3', $c: '#999' },
    { t: 'Ausgabe', $bg: '#f2eef2', $c: '#7f7f7f', $b: true, $line: '#8e8e8e' },
    { t: 'Berechnung', $bg: '#f5f0f5', $c: '#bdb8bd', $b: true, $line: '#c5c0c5' },
    { t: 'Eingabe', $bg: '#dfdbdf', $c: '#8f8f8f', $line: '#a5a5a5' },
    { t: 'Erklärender ...', $bg: '#f5f0f7', $c: '#a8a8a8', $i: true },
];

/* ---------- parts ---------- */

const TopBar = () => (
    <Head>
        <TitleRow>
            <Qat>
                <Slot $w={20}><SaveIcon /></Slot>
                <Slot $w={10} />
                <Slot $w={20}><UndoIcon /></Slot>
                <Slot $w={8}><Arrow $c="#fff" /></Slot>
                <Slot $w={12} />
                <Slot $w={20}><UndoIcon c="#5d9b7b" flip /></Slot>
                <Slot $w={8}><Arrow $c="#5d9b7b" /></Slot>
                <Slot $w={2} />
                <Slot $w={14}><TouchIcon /></Slot>
                <Slot $w={5} />
                <Slot $w={8}><Arrow $c="#fff" /></Slot>
                <Slot $w={13} />
                <Slot $w={8}><CustomizeIcon /></Slot>
            </Qat>
            <ContextLabel>Tabellentools</ContextLabel>
            <DocTitle>Mitarbeiterkarte (1) - Excel</DocTitle>
            <WinButtons>
                <WinButton><BoxArrowIcon /></WinButton>
                <WinButton><MinIcon /></WinButton>
                <WinButton><RestoreIcon /></WinButton>
                <WinButton><CloseIcon /></WinButton>
            </WinButtons>
        </TitleRow>
        <TabRow>
            <Tab $w={63}>Datei</Tab>
            <Tab $w={51} $on>Start</Tab>
            <Tab $w={76}>Einfügen</Tab>
            <Tab $w={95}>Seitenlayout</Tab>
            <Tab $w={71}>Formeln</Tab>
            <Tab $w={64}>Daten</Tab>
            <Tab $w={84}>Überprüfen</Tab>
            <Tab $w={75}>Ansicht</Tab>
            <Tab $w={80} $ctx>Entwurf</Tab>
            <Tell><BulbIcon />Was möchten Sie tun?</Tell>
            <UserName>Schartmüller Verena</UserName>
            <Share><ShareIcon />Freigeben</Share>
        </TabRow>
    </Head>
);

const Big = ({ icon, lines, w, off, caret = true }) => (
    <BigButton $w={w} $off={off}>
        <BigIcon>{icon}</BigIcon>
        <BigText>
            {lines.map((l, i) => (
                <TextLine key={i}>
                    {l}
                    {caret && i === lines.length - 1 && lines.length > 1 && <Arrow $c={off ? '#bbb' : '#666'} />}
                </TextLine>
            ))}
            {lines.length === 1 && <TextLine><Arrow $c={off ? '#bbb' : '#666'} /></TextLine>}
        </BigText>
    </BigButton>
);

const RibbonBar = () => (
    <Ribbon>
        <Group $w={189}>
            <GroupBody>
                <Big w={60} icon={<PasteIcon />} lines={['Einfügen']} />
                <Stack $w={128}>
                    <StackRow><Slot $w={18}><ScissorsIcon /></Slot>Ausschneiden</StackRow>
                    <StackRow><Slot $w={18}><CopyIcon /></Slot>Kopieren<Slot $w={22}><Arrow /></Slot></StackRow>
                    <StackRow $off><Slot $w={18}><PainterIcon /></Slot>Format übertragen</StackRow>
                </Stack>
            </GroupBody>
            <GroupLabel $pr={17}>Zwischenablage</GroupLabel>
            <Launcher><Launch /></Launcher>
        </Group>

        <Group $w={207}>
            <GroupBody $pl={4} $pt={7}>
                <Rows>
                    <ToolRow>
                        <Select $w={110} $mr={1} $calibri>Calibri<SelectDrop><Arrow /></SelectDrop></Select>
                        <Select $w={43} $calibri>11<SelectDrop><Arrow /></SelectDrop></Select>
                        <Slot $w={21}><FontA $s={15}>A<SizeMark><ArrowUp $c="#4a82bb" /></SizeMark></FontA></Slot>
                        <Slot $w={22}><FontA $s={12}>A<SizeMark><Arrow $c="#4a82bb" /></SizeMark></FontA></Slot>
                    </ToolRow>
                    <ToolRow $h={22}>
                        <Slot $w={2} />
                        <Slot $w={20}><BoldGlyph>F</BoldGlyph></Slot>
                        <Slot $w={20}><BoldGlyph $i>K</BoldGlyph></Slot>
                        <Slot $w={24}><BoldGlyph $u>U</BoldGlyph></Slot>
                        <Slot $w={13}><Arrow /></Slot>
                        <Sep $w={8} />
                        <Slot $w={20}><BorderIcon /></Slot>
                        <Slot $w={14}><Arrow $c="#bbb" /></Slot>
                        <Sep $w={8} />
                        <Slot $w={24}><FillIcon /></Slot>
                        <Slot $w={10}><Arrow $c="#bbb" /></Slot>
                        <Slot $w={24}><ColorA>A</ColorA></Slot>
                        <Slot $w={8}><Arrow /></Slot>
                    </ToolRow>
                </Rows>
            </GroupBody>
            <GroupLabel $pr={17}>Schriftart</GroupLabel>
            <Launcher><Launch /></Launcher>
        </Group>

        <Group $w={311}>
            <GroupBody $pl={4} $pt={7}>
                <Rows>
                    <ToolRow>
                        <Slot $w={22}><LinesIcon rows={[[2, 0, 15], [5, 0, 15], [8, 0, 15]]} /></Slot>
                        <Slot $w={22}><LinesIcon rows={[[5, 0, 15], [8, 0, 15], [11, 0, 15]]} /></Slot>
                        <Slot $w={22}><LinesIcon rows={[[9, 0, 15], [12, 0, 15], [15, 0, 15]]} /></Slot>
                        <Sep $w={8} />
                        <Slot $w={24}><OrientIcon /></Slot>
                        <Slot $w={6}><Arrow $c="#bbb" /></Slot>
                        <Slot $w={8} />
                        <Sep $w={13} />
                        <Slot $w={20}><WrapIcon /></Slot>
                        <Slot $w={5} />
                        <OffText>Textumbruch</OffText>
                    </ToolRow>
                    <ToolRow $h={22}>
                        <Slot $w={22}><LinesIcon rows={[[2, 0, 15], [5, 0, 10], [8, 0, 15], [11, 0, 10], [14, 0, 15]]} /></Slot>
                        <Slot $w={22}><LinesIcon rows={[[2, 0, 15], [5, 3, 12], [8, 0, 15], [11, 3, 12], [14, 0, 15]]} /></Slot>
                        <Slot $w={22}><LinesIcon rows={[[2, 0, 15], [5, 5, 15], [8, 0, 15], [11, 5, 15], [14, 0, 15]]} /></Slot>
                        <Sep $w={8} />
                        <Slot $w={24}><IndentIcon /></Slot>
                        <Slot $w={20}><IndentIcon flip /></Slot>
                        <Sep $w={13} />
                        <Slot $w={20}><MergeIcon /></Slot>
                        <Slot $w={1} />
                        <Slot $off $w={131}>Verbinden und zentrieren</Slot>
                        <Slot $w={26}><Arrow $c="#bbb" /></Slot>
                    </ToolRow>
                </Rows>
            </GroupBody>
            <GroupLabel>Ausrichtung</GroupLabel>
            <Launcher><Launch /></Launcher>
        </Group>

        <Group $w={140}>
            <GroupBody $pl={4} $pt={7}>
                <Rows>
                    <ToolRow>
                        <Select $w={131} $c="#8a8a8a">Text<SelectDrop $off><Arrow $c="#bbb" /></SelectDrop></Select>
                    </ToolRow>
                    <ToolRow $h={22}>
                        <Slot $w={20}><CashIcon /></Slot>
                        <Slot $w={14}><Arrow $c="#bbb" /></Slot>
                        <Slot $w={22}><Percent>%</Percent></Slot>
                        <Slot $w={22}><Thousands>000</Thousands></Slot>
                        <Sep $w={8} />
                        <Slot $w={22}><DecMark><span>←</span><span>,0</span><span /><span>,00</span></DecMark></Slot>
                        <Slot $w={22}><DecMark><span /><span>,00</span><span>→</span><span>,0</span></DecMark></Slot>
                    </ToolRow>
                </Rows>
            </GroupBody>
            <GroupLabel $pr={17}>Zahl</GroupLabel>
            <Launcher><Launch /></Launcher>
        </Group>

        <Group $w={615}>
            <GroupBody>
                <Big w={94} off icon={<CondIcon />} lines={['Bedingte', 'Formatierung']} />
                <Big w={64} off icon={<TableIcon />} lines={['Als Tabelle', 'formatieren']} />
                <Gallery>
                    <GalleryGrid>
                        {STYLES.map(({ t, ...s }) => <Style key={t} {...s}>{t}</Style>)}
                    </GalleryGrid>
                    <GalleryScroll>
                        <ScrollPart><ArrowUp $c="#bbb" /></ScrollPart>
                        <ScrollPart><Arrow $c="#bbb" /></ScrollPart>
                        <ScrollPart><Arrow $c="#bbb" /></ScrollPart>
                    </GalleryScroll>
                </Gallery>
            </GroupBody>
            <GroupLabel>Formatvorlagen</GroupLabel>
        </Group>

        <Group $w={152}>
            <GroupBody>
                <Big w={56} off icon={<CellsIcon kind="insert" />} lines={['Einfügen']} />
                <Big w={46} off icon={<CellsIcon kind="delete" />} lines={['Löschen']} />
                <Big w={46} icon={<CellsIcon kind="format" />} lines={['Format']} />
            </GroupBody>
            <GroupLabel $pr={4}>Zellen</GroupLabel>
        </Group>

        <Group $w={265}>
            <GroupBody $pl={6}>
                <Stack $w={106}>
                    <StackRow><Slot $w={20}><SigmaIcon /></Slot>AutoSumme<Slot $w={22}><Arrow /></Slot></StackRow>
                    <StackRow $off><Slot $w={20}><FillDownIcon /></Slot>Füllbereich<Slot $w={10}><Arrow $c="#bbb" /></Slot></StackRow>
                    <StackRow><Slot $w={20}><EraserIcon /></Slot>Löschen<Slot $w={10}><Arrow /></Slot></StackRow>
                </Stack>
                <Big w={76} off icon={<SortIcon />} lines={['Sortieren und', 'Filtern']} />
                <Big w={72} icon={<FindIcon />} lines={['Suchen und', 'Auswählen']} />
            </GroupBody>
            <GroupLabel>Bearbeiten</GroupLabel>
        </Group>

        <Collapse>
            <Svg w={10} h={7}><path d="M1 6l4-4 4 4" stroke="#666" strokeWidth="1.6" /></Svg>
        </Collapse>
    </Ribbon>
);

const Formula = () => (
    <FormulaBar>
        <NameBox>C4<Arrow $s={4} /></NameBox>
        <Dots />
        <FxBox>
            <CloseIcon c="#7d7d7d" s={11} sw={1.5} />
            <CheckIcon />
            <FxText>fx</FxText>
        </FxBox>
        <FormulaInput>Sebastian<ChevronDown /></FormulaInput>
    </FormulaBar>
);

const SheetGrid = () => (
    <Grid>
        <RowLine>
            <Corner />
            {LETTERS.map(l => <ColHead key={l} $on={l === 'C'}>{l}</ColHead>)}
            <ColHead />
        </RowLine>
        <RowLine>
            <RowHead>1</RowHead>
            {HEADERS.map((h, i) => (
                <HeadCell key={h}>
                    {h}
                    {i < 14 && <FilterButton><Arrow $s={4} $c="#7f7f7f" /></FilterButton>}
                </HeadCell>
            ))}
        </RowLine>
        {Array.from({ length: 38 }, (_, r) => {
            const n = r + 2;
            const person = PEOPLE[r];
            const cells = person ? cellsFor(person) : Array(15).fill('');
            return (
                <RowLine key={n}>
                    <RowHead $on={n === 4}>{n}</RowHead>
                    {cells.map((c, i) => {
                        const sel = n === 4 && i === 2;
                        return (
                            <Cell key={i} $table={!!person} $band={!!person && r % 2 === 0} $sel={sel} $tight={i === 0 || i === 4}>
                                {c}
                                {sel && <Selection />}
                            </Cell>
                        );
                    })}
                </RowLine>
            );
        })}
    </Grid>
);

const ScrollBar = () => (
    <VScroll>
        <ScrollButton><ArrowUp $s={4} $c="#8a8a8a" /></ScrollButton>
        <ScrollButton as="div" $h={739} />
        <ScrollTrack />
        <ScrollButton $h={13}><Arrow $s={4} $c="#8a8a8a" /></ScrollButton>
    </VScroll>
);

const SheetTabs = () => (
    <TabBar>
        <TabNav><TriLeft $c="#c8c8c8" /><TriRight $c="#c8c8c8" /></TabNav>
        <SheetTab $w={66} $on>Sheet1</SheetTab>
        <SheetTab $w={88}>data_cache</SheetTab>
        <TabDivider />
        <AddSheet><AddIcon /></AddSheet>
        <HDots />
        <HScroll>
            <HButton $w={15}><TriLeft /></HButton>
            <HButton $w={157} />
            <HSpace />
            <HButton $w={15}><TriRight /></HButton>
        </HScroll>
    </TabBar>
);

const TaskPane = () => (
    <Pane>
        <PaneTitleRow>
            <PaneTitle>Microsoft Dynamics Office Ad...</PaneTitle>
            <Arrow $s={5} $c="#7d7d7d" />
            <PaneClose><CloseIcon c="#555" s={11} sw={1.8} /></PaneClose>
        </PaneTitleRow>
        <PaneBox>
            <PaneHead>
                <PaneBrand>Excel Add-In</PaneBrand>
                <GearIcon />
                <PaneUser>Verena Schartmüller</PaneUser>
            </PaneHead>
            <PaneToggle><TriLeft $c="#888" /></PaneToggle>
            <Meta>
                <MetaRow><ListIcon />Quelle: Mitarbeiterkarte</MetaRow>
                <MetaRow><ListIcon />Feld: Middle_Name</MetaRow>
            </Meta>
            <Fill />
            <Actions>
                <Action><ActionIcon><PlusIcon /></ActionIcon>Neu</Action>
                <Action><ActionIcon><RefreshIcon /></ActionIcon>Aktualisieren</Action>
                <Action $on>
                    <ActionIcon><PublishIcon /></ActionIcon>Veröffentlichen
                    <Cursor><HandCursor /></Cursor>
                </Action>
                <Action><ActionIcon><FilterIcon /></ActionIcon>Filtern</Action>
                <Action><ActionIcon><DesignIcon /></ActionIcon>Gestaltung</Action>
            </Actions>
            <PaneFoot><FlagIcon />1</PaneFoot>
        </PaneBox>
    </Pane>
);

const Status = () => (
    <StatusBar>
        <StatusLeft>Bearbeiten</StatusLeft>
        <ViewIcon><GridView /></ViewIcon>
        <ViewIcon><PageView /></ViewIcon>
        <ViewIcon><BreakView /></ViewIcon>
        <Zoom>
            <ZoomMark>−</ZoomMark>
            <ZoomTrack />
            <ZoomMark>+</ZoomMark>
            <ZoomValue>100 %</ZoomValue>
        </Zoom>
    </StatusBar>
);

export default function App() {
    return (
        <Page>
            <Global />
            <TopBar />
            <RibbonBar />
            <Formula />
            <Main>
                <SheetArea>
                    <GridWrap>
                        <SheetGrid />
                        <ScrollBar />
                    </GridWrap>
                    <SheetTabs />
                </SheetArea>
                <TaskPane />
            </Main>
            <Status />
        </Page>
    );
}
